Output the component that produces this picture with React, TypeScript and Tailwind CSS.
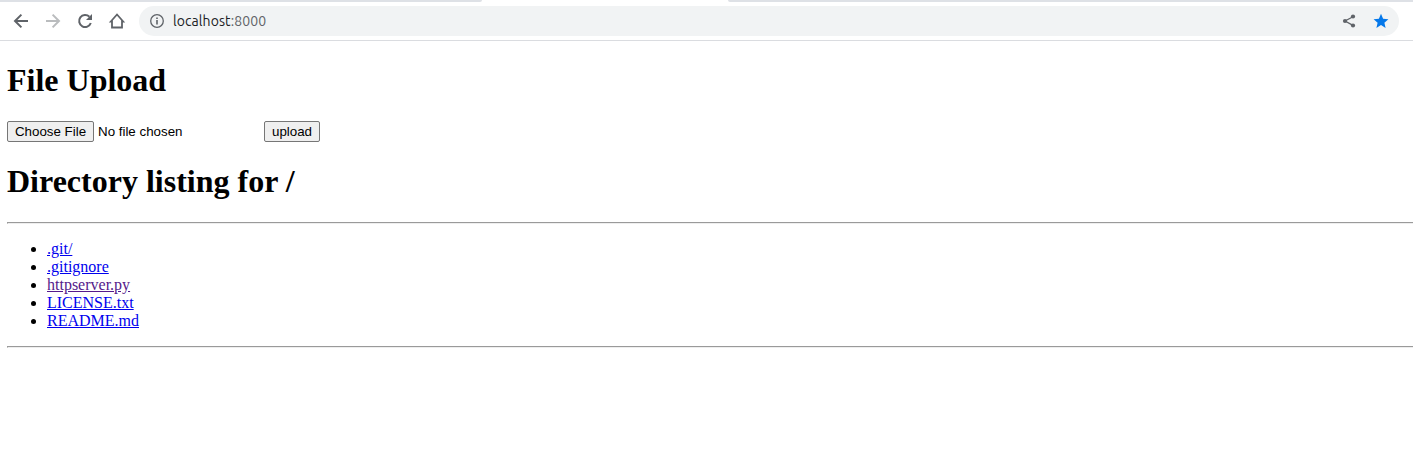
import React from "react";

const files = [
  { name: ".git/", visited: false },
  { name: ".gitignore", visited: false },
  { name: "httpserver.py", visited: true },
  { name: "LICENSE.txt", visited: false },
  { name: "README.md", visited: false },
];

function BackIcon() {
  return (
    <svg width="20" height="20" viewBox="0 0 20 20" fill="none" stroke="#5f6368" strokeWidth="2">
      <path d="M17 10H4.5M10.4 3.6 4 10l6.4 6.4" />
    </svg>
  );
}

function ForwardIcon() {
  return (
    <svg width="20" height="20" viewBox="0 0 20 20" fill="none" stroke="#babcbe" strokeWidth="2">
      <path d="M3 10h12.5M9.6 3.6 16 10l-6.4 6.4" />
    </svg>
  );
}

function ReloadIcon() {
  return (
    <svg width="20" height="20" viewBox="0 0 20 20" fill="none">
      <path d="M14.4 5.8A6 6 0 1 0 15.8 12" stroke="#5f6368" strokeWidth="2" />
      <path d="M17 3v6h-6Z" fill="#5f6368" />
    </svg>
  );
}

function HomeIcon() {
  return (
    <svg width="20" height="20" viewBox="0 0 20 20" fill="none" stroke="#5f6368" strokeWidth="1.8">
      <path d="M3.8 10.5 10 3.5l6.2 7H15v6H5v-6Z" />
    </svg>
  );
}

function InfoIcon() {
  return (
    <svg width="16" height="16" viewBox="0 0 16 16" fill="none">
      <circle cx="8" cy="8" r="6.3" stroke="#5f6368" strokeWidth="1.3" />
      <path d="M7.2 4.4h1.6V6H7.2ZM7.2 7.1h1.6v4.5H7.2Z" fill="#5f6368" />
    </svg>
  );
}

function ShareIcon() {
  return (
    <svg width="16" height="16" viewBox="0 0 16 16" fill="none">
      <path d="M12 3.7 4 8l8 4.4" stroke="#5f6368" strokeWidth="1.3" />
      <g fill="#5f6368">
        <circle cx="12" cy="3.5" r="2.1" />
        <circle cx="4" cy="8" r="2.1" />
        <circle cx="12" cy="12.5" r="2.1" />
      </g>
    </svg>
  );
}

function StarIcon() {
  return (
    <svg width="16" height="16" viewBox="0 0 16 16" fill="#0578ea">
      <path d="m8 .8 2.1 4.9 5.3.5-4 3.5 1.2 5.2L8 12.1l-4.6 2.8 1.2-5.2-4-3.5 5.3-.5Z" />
    </svg>
  );
}

function TabStrip() {
  return (
    <div className="flex h-[2px] w-full bg-white">
      <div className="h-[2px] w-[482px] rounded-br-[2px] bg-[#dee1e6]" />
      <div className="h-[2px] w-[246px]" />
      <div className="h-[2px] flex-1 rounded-bl-[2px] bg-[#dee1e6]" />
    </div>
  );
}

function Toolbar() {
  return (
    <div className="flex h-[39px] items-start border-b border-[#dadce0] pt-1 pr-[14px] pl-[11px]">
      <div className="flex h-[30px] items-center gap-3">
        <BackIcon />
        <ForwardIcon />
        <ReloadIcon />
        <HomeIcon />
      </div>
      <div className="ml-3 flex h-[30px] flex-1 items-center rounded-full bg-[#f1f3f4] px-[10px]">
        <InfoIcon />
        <div className="ml-2 flex-1 font-['Ubuntu','Noto_Sans',sans-serif] text-[14px] leading-5 tracking-[0.08px] text-[#202124]">
          localhost<span className="text-[#5f6368]">:8000</span>
        </div>
        <div className="flex items-center gap-4">
          <ShareIcon />
          <StarIcon />
        </div>
      </div>
    </div>
  );
}

function Rule() {
  return <hr className="-mr-px h-[2px] border border-t-[#9a9a9a] border-r-[#eeeeee] border-b-[#eeeeee] border-l-[#9a9a9a]" />;
}

const buttonClass =
  "h-[21px] rounded-[2px] border border-[#767676] bg-[#efefef] text-center leading-[19px]";

export default function App() {
  return (
    <div className="h-[452px] overflow-hidden bg-white">
      <TabStrip />
      <Toolbar />
      <main className="pt-[21px] pl-[7px] font-['Liberation_Serif',serif] text-black">
        <h1 className="h-[37px] text-[32px] leading-[37px] font-bold">File Upload</h1>
        <form
          className="mt-[22px] flex h-[21px] font-['Liberation_Sans',sans-serif] text-[13.333px]"
          onSubmit={(event) => event.preventDefault()}
        >
          <button type="button" className={`${buttonClass} w-[87px]`}>Choose File</button>
          <span className="ml-1 w-[166px] leading-[21px]">No file chosen</span>
          <button type="submit" className={`${buttonClass} w-[56px]`}>upload</button>
        </form>
        <h1 className="mt-[21px] mb-[22px] h-[37px] text-[32px] leading-[37px] font-bold">Directory listing for /</h1>
        <Rule />
        <ul className="my-4 list-disc pl-10 text-[16px] leading-[18px]">
          {files.map((file) => (
            <li key={file.name}>
              <a href="#" className={file.visited ? "text-[#551a8b] underline" : "text-[#0000ee] underline"}>
                {file.name}
              </a>
            </li>
          ))}
        </ul>
        <Rule />
      </main>
    </div>
  );
}
